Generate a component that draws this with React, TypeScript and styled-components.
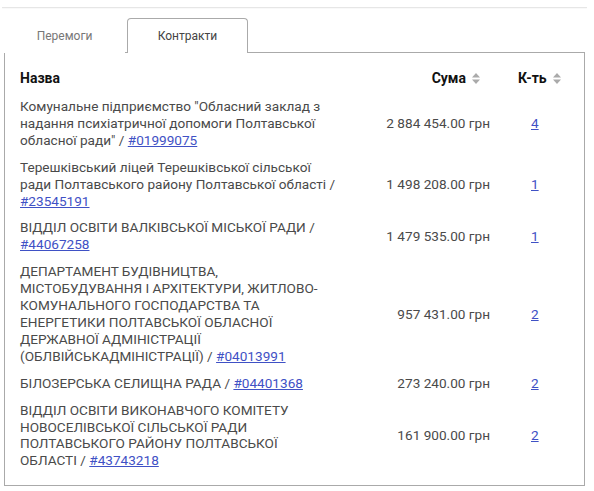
import React from "react";
import styled, { createGlobalStyle } from "styled-components";

const GlobalStyle = createGlobalStyle`
  html, body { margin: 0; padding: 0; background: #fff; }
  body { font-family: Roboto, "Noto Sans", Arial, sans-serif; color: #4a4a4a; }
`;

const Page = styled.div`
  width: 594px;
  height: 491px;
  box-sizing: border-box;
`;

const TopRule = styled.div`
  margin: 7px 7px 0 2px;
  height: 1px;
  background: #e6e6e6;
  box-shadow: 0 1px 1px rgba(0, 0, 0, 0.03);
`;

const Content = styled.div`
  margin: 10px 9px 0 4px;
`;

const TabList = styled.div`
  display: flex;
  gap: 2px;
  border-bottom: 1px solid #aaa;
`;

const Tab = styled.div<{ $active?: boolean }>`
  width: 121px;
  height: 35px;
  box-sizing: border-box;
  display: flex;
  align-items: center;
  justify-content: center;
  padding-bottom: 1px;
  font-size: 12px;
  color: ${(p) => (p.$active ? "#444" : "#777")};
  background: #fff;
  border: 1px solid ${(p) => (p.$active ? "#aaa" : "transparent")};
  border-bottom: none;
  border-radius: 4px 4px 0 0;
  margin-bottom: -1px;
`;

const Panel = styled.div`
  border: 1px solid #aaa;
  border-top: none;
  padding: 15px 15px 11px 15px;
`;

const Table = styled.table`
  width: 551px;
  border-collapse: collapse;
  table-layout: fixed;
`;

const Col = styled.col<{ $w: number }>`
  width: ${(p) => p.$w}px;
`;

const Th = styled.th<{ $align?: string; $pl?: number; $pr?: number }>`
  font-size: 14px;
  font-weight: 700;
  color: #111;
  line-height: 20px;
  padding: 0 ${(p) => p.$pr ?? 0}px 5px ${(p) => p.$pl ?? 0}px;
  text-align: ${(p) => p.$align ?? "left"};
  white-space: nowrap;
`;

const Td = styled.td<{ $align?: string; $pl?: number; $pr?: number }>`
  font-size: 13.6px;
  line-height: 16.9px;
  color: #4a4a4a;
  padding: 5px ${(p) => p.$pr ?? 0}px 5px ${(p) => p.$pl ?? 0}px;
  text-align: ${(p) => p.$align ?? "left"};
  vertical-align: middle;
`;

const Link = styled.a`
  color: #3f51c5;
  text-decoration: underline;
`;

const SortIcon = styled.svg`
  display: inline-block;
  vertical-align: -1px;
  margin-left: 6px;
`;

const Sort = () => (
  <SortIcon width="8" height="11" viewBox="0 0 8 11">
    <path d="M4 0 L8 4.5 H0 Z" fill="#aaa" />
    <path d="M4 11 L8 6.5 H0 Z" fill="#aaa" />
  </SortIcon>
);

type Row = { name: string; code: string; sum: string; count: string };

const rows: Row[] = [
  {
    name: 'Комунальне підприємство "Обласний заклад з надання психіатричної допомоги Полтавської обласної ради"',
    code: "#01999075",
    sum: "2 884 454.00 грн",
    count: "4",
  },
  {
    name: "Терешківський ліцей Терешківської сільської ради Полтавського району Полтавської області",
    code: "#23545191",
    sum: "1 498 208.00 грн",
    count: "1",
  },
  {
    name: "ВІДДІЛ ОСВІТИ ВАЛКІВСЬКОЇ МІСЬКОЇ РАДИ",
    code: "#44067258",
    sum: "1 479 535.00 грн",
    count: "1",
  },
  {
    name: "ДЕПАРТАМЕНТ БУДІВНИЦТВА, МІСТОБУДУВАННЯ І АРХІТЕКТУРИ, ЖИТЛОВО-КОМУНАЛЬНОГО ГОСПОДАРСТВА ТА ЕНЕРГЕТИКИ ПОЛТАВСЬКОЇ ОБЛАСНОЇ ДЕРЖАВНОЇ АДМІНІСТРАЦІЇ (ОБЛВІЙСЬКАДМІНІСТРАЦІЇ)",
    code: "#04013991",
    sum: "957 431.00 грн",
    count: "2",
  },
  {
    name: "БІЛОЗЕРСЬКА СЕЛИЩНА РАДА",
    code: "#04401368",
    sum: "273 240.00 грн",
    count: "2",
  },
  {
    name: "ВІДДІЛ ОСВІТИ ВИКОНАВЧОГО КОМІТЕТУ НОВОСЕЛІВСЬКОЇ СІЛЬСЬКОЇ РАДИ ПОЛТАВСЬКОГО РАЙОНУ ПОЛТАВСЬКОЇ ОБЛАСТІ",
    code: "#43743218",
    sum: "161 900.00 грн",
    count: "2",
  },
];

export default function App() {
  return (
    <Page>
      <GlobalStyle />
      <TopRule />
      <Content>
        <TabList>
          <Tab>Перемоги</Tab>
          <Tab $active>Контракти</Tab>
        </TabList>
        <Panel>
          <Table>
            <colgroup>
              <Col $w={332} />
              <Col $w={138} />
              <Col $w={81} />
            </colgroup>
            <thead>
              <tr>
                <Th>Назва</Th>
                <Th $align="right" $pr={10}>
                  Сума
                  <Sort />
                </Th>
                <Th $pl={28}>
                  К-ть
                  <Sort />
                </Th>
              </tr>
            </thead>
            <tbody>
              {rows.map((r) => (
                <tr key={r.code}>
                  <Td $pr={15}>
                    {r.name} / <Link href="#">{r.code}</Link>
                  </Td>
                  <Td $align="right">{r.sum}</Td>
                  <Td $pl={41}>
                    <Link href="#">{r.count}</Link>
                  </Td>
                </tr>
              ))}
            </tbody>
          </Table>
        </Panel>
      </Content>
    </Page>
  );
}
